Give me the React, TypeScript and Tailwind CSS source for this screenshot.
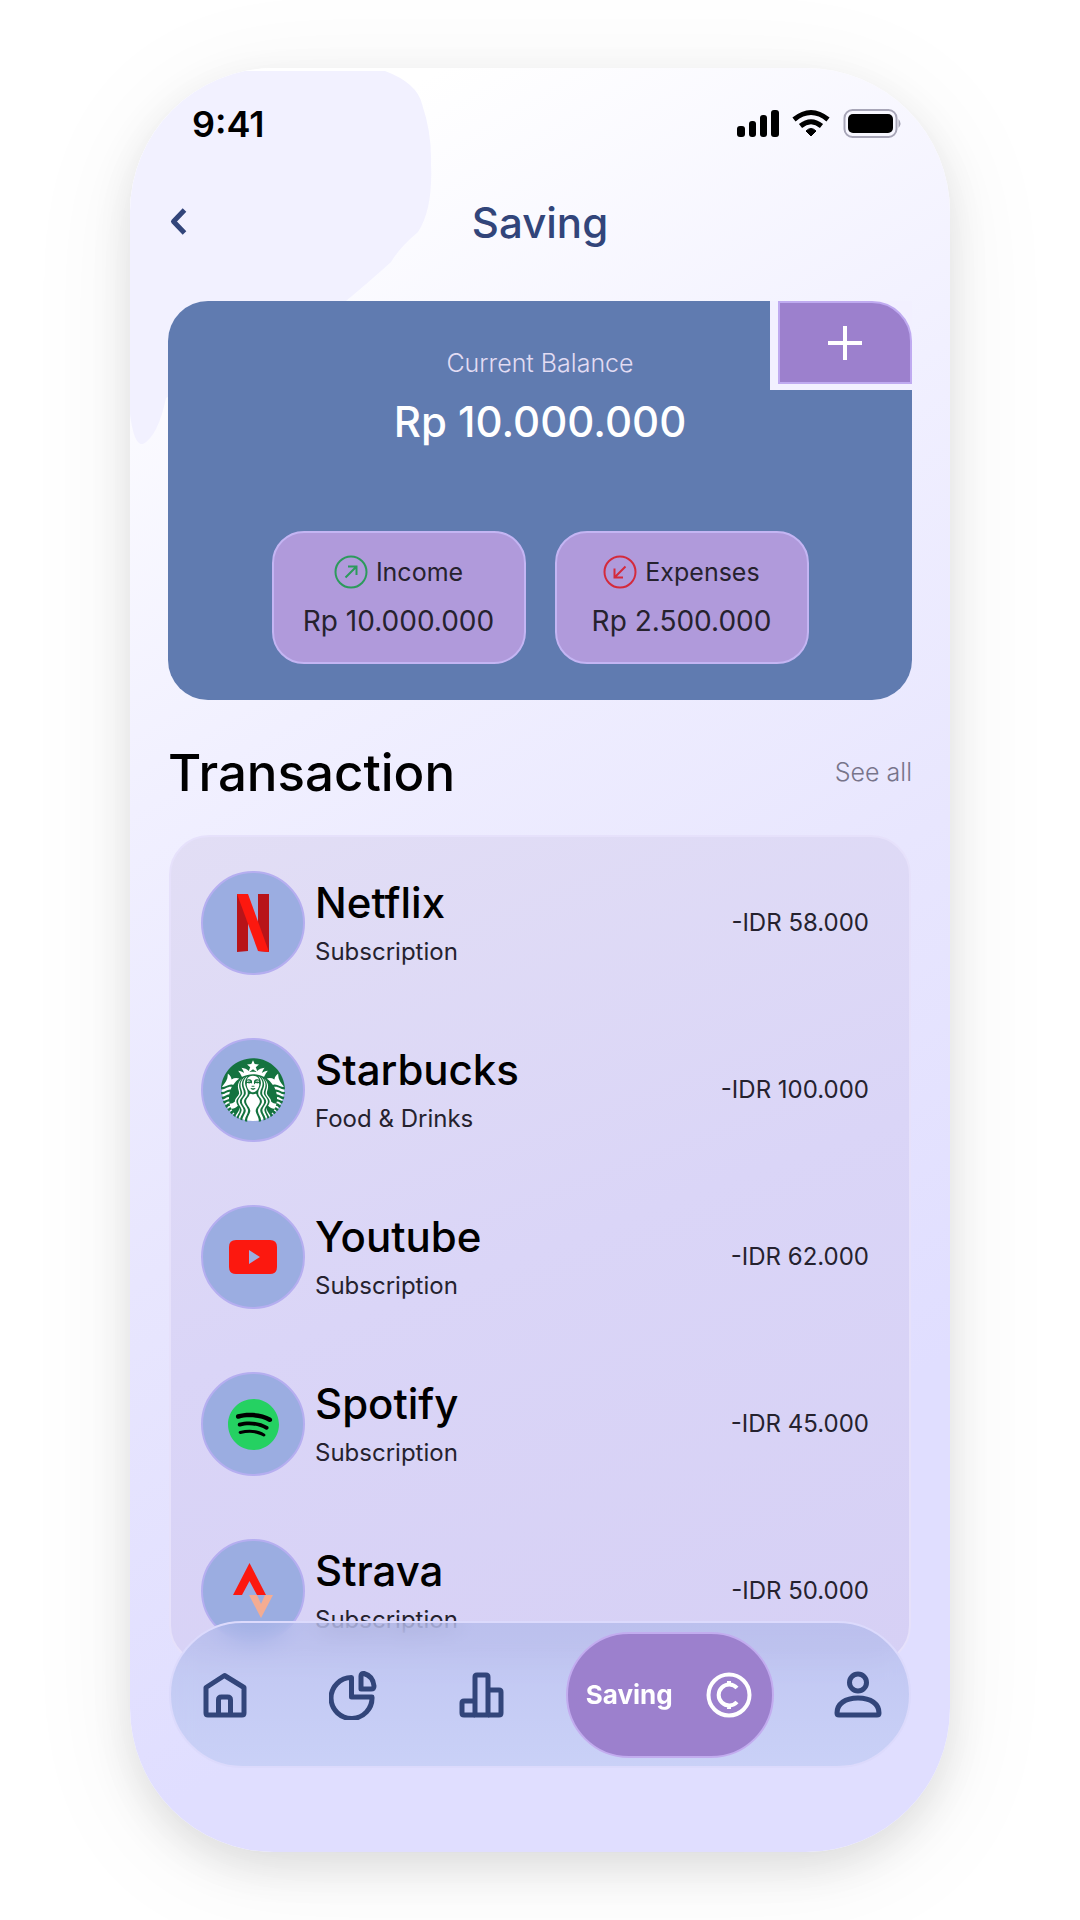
import React from 'react';
import { SiSpotify, SiStarbucks } from 'react-icons/si';

interface Transaction {
  id: string;
  name: string;
  category: string;
  amount: string;
  logo: React.ReactNode;
}

const NetflixLogo = () => (
  <svg width="34" height="60" viewBox="0 0 34 60" aria-hidden="true">
    <path d="M1 1h11v57l-11 1z" fill="#b81419" />
    <path d="M22 1h11v58l-11-1z" fill="#b81419" />
    <path d="M1 1h11l21 58-11-1z" fill="#fc180f" />
  </svg>
);

const StarbucksLogo = () => (
  <span className="flex size-[62px] items-center justify-center rounded-full bg-white">
    <SiStarbucks className="size-16 shrink-0 text-[#14733f]" aria-hidden="true" />
  </span>
);

const YoutubeLogo = () => (
  <svg width="48" height="34" viewBox="0 0 48 34" aria-hidden="true">
    <path
      fillRule="evenodd"
      d="M7 0h34q7 0 7 7v20q0 7-7 7H7q-7 0-7-7V7q0-7 7-7zM20 10v14l11-7z"
      fill="#fc180f"
    />
  </svg>
);

const SpotifyLogo = () => (
  <span className="flex size-12 items-center justify-center rounded-full bg-black">
    <SiSpotify className="size-[51px] shrink-0 text-[#25d162]" aria-hidden="true" />
  </span>
);

const StravaLogo = () => (
  <svg width="40" height="56" viewBox="0 0 40 56" aria-hidden="true">
    <path d="M16.5 0L33 32h-9l-7.5-14L9 32H0z" fill="#fc180f" />
    <path d="M16 32h8l4 9 4-9h8L28 55z" fill="#f4ac92" />
  </svg>
);

const transactions: Transaction[] = [
  { id: 'netflix', name: 'Netflix', category: 'Subscription', amount: '-IDR 58.000', logo: <NetflixLogo /> },
  { id: 'starbucks', name: 'Starbucks', category: 'Food & Drinks', amount: '-IDR 100.000', logo: <StarbucksLogo /> },
  { id: 'youtube', name: 'Youtube', category: 'Subscription', amount: '-IDR 62.000', logo: <YoutubeLogo /> },
  { id: 'spotify', name: 'Spotify', category: 'Subscription', amount: '-IDR 45.000', logo: <SpotifyLogo /> },
  { id: 'strava', name: 'Strava', category: 'Subscription', amount: '-IDR 50.000', logo: <StravaLogo /> },
];

const StatusBar = () => (
  <div className="flex h-11 items-center justify-between pr-2 pl-6">
    <span className="text-4xl font-semibold text-black">9:41</span>
    <svg width="168" height="30" viewBox="0 0 168 30" aria-hidden="true">
      <g fill="#000">
        <rect x="1" y="17" width="8" height="11" rx="3" />
        <rect x="13" y="12" width="7" height="16" rx="3" />
        <rect x="24" y="6" width="7" height="22" rx="3" />
        <rect x="35" y="1" width="8" height="27" rx="3" />
        <path d="M75 27l-5-5q5-5 10 0z" stroke="#000" strokeWidth="1" strokeLinejoin="round" />
        <rect x="112" y="5" width="45" height="19" rx="5" />
      </g>
      <g fill="none" stroke="#000" strokeWidth="5">
        <path d="M58 10.5q17-14 34 0" />
        <path d="M64.5 17q10.5-8.5 21 0" />
      </g>
      <rect x="108.5" y="1" width="52" height="27" rx="8" fill="none" stroke="#a8a6b8" strokeWidth="2" />
      <path d="M162.5 10q4 4.5 0 9z" fill="#a8a6b8" />
    </svg>
  </div>
);

const PageHeader = () => (
  <header className="mt-11 grid h-16 grid-cols-[48px_1fr_48px] items-center">
    <button type="button" aria-label="Back" className="flex h-12 items-center pl-[2px]">
      <svg width="18" height="30" viewBox="0 0 18 30" fill="none" stroke="#32457a" strokeWidth="5" aria-hidden="true">
        <path d="M14.5 3L3.5 14.5L14.5 26" strokeLinejoin="round" />
      </svg>
    </button>
    <h1 className="text-center text-[42px] font-medium text-[#32457a]">Saving</h1>
  </header>
);

interface SummaryTileProps {
  label: string;
  amount: string;
  icon: React.ReactNode;
}

const SummaryTile = ({ label, amount, icon }: SummaryTileProps) => (
  <div className="flex h-[133px] max-w-[254px] flex-1 flex-col items-center justify-center gap-3 rounded-[32px] border-2 border-[#c4b5f3] bg-[#b09adb] text-[#26222e]">
    <div className="flex items-center gap-2 text-[25px] leading-8">
      {icon}
      {label}
    </div>
    <div className="text-[28px] leading-10 whitespace-nowrap">{amount}</div>
  </div>
);

const BalanceCard = () => (
  <section className="relative mt-[47px] flex h-[399px] flex-col items-center rounded-[40px] bg-[#607bb0] px-4 pt-[46px] pb-9">
    <h2 className="text-[25px] leading-8 font-light text-[#e2dcf3]">Current Balance</h2>
    <p className="mt-3 text-[42px] leading-[62px] font-medium text-white">Rp 10.000.000</p>

    <div className="mt-auto flex w-full justify-center gap-[29px]">
      <SummaryTile
        label="Income"
        amount="Rp 10.000.000"
        icon={
          <svg width="34" height="34" viewBox="0 0 34 34" fill="none" stroke="#2c9a5c" strokeWidth="2" aria-hidden="true">
            <circle cx="17" cy="17" r="15.5" />
            <path d="M11.5 22.5L22 12M14 11.5h8.5V20" />
          </svg>
        }
      />
      <SummaryTile
        label="Expenses"
        amount="Rp 2.500.000"
        icon={
          <svg width="34" height="34" viewBox="0 0 34 34" fill="none" stroke="#d42a3c" strokeWidth="2" aria-hidden="true">
            <circle cx="17" cy="17" r="15.5" />
            <path d="M22.5 11.5L12 22M11.5 13.5v9H20" />
          </svg>
        }
      />
    </div>

    {/* Add button sits in the notch of the card */}
    <div className="absolute top-0 right-0 bg-[#f2f0ff] pb-[6px] pl-2">
      <button
        type="button"
        aria-label="Add saving"
        className="flex h-[83px] w-[134px] items-center justify-center rounded-tr-[40px] border-2 border-[#bfaaf0] bg-[#9c80cd]"
      >
        <svg width="34" height="36" viewBox="0 0 34 36" stroke="#fff" strokeWidth="4" aria-hidden="true">
          <path d="M17 1v34M0 18h34" />
        </svg>
      </button>
    </div>
  </section>
);

const TransactionList = () => (
  <section>
    <div className="mt-[41px] flex h-16 items-center justify-between">
      <h2 className="text-[51px] font-medium text-black">Transaction</h2>
      <a href="#transactions" className="text-[25px] font-light text-[#77748a]">
        See all
      </a>
    </div>

    <ul
      id="transactions"
      className="mx-px mt-[30px] flex flex-col gap-[63px] rounded-[40px] border-2 border-[#e6e1fb] bg-linear-160 from-[#e2def5] via-[#dad5f7] to-[#d6d0f5] px-[30px] pt-[34px] pb-5"
    >
      {transactions.map((item) => (
        <li key={item.id} className="flex h-[104px] items-center">
          <div className="flex size-[104px] shrink-0 items-center justify-center rounded-full border-2 border-[#b5aef0] bg-[#9bade1]">
            {item.logo}
          </div>
          <div className="ml-[10px] flex-1">
            <h3 className="text-[42px] leading-[58px] font-medium text-black">{item.name}</h3>
            <p className="text-2xl leading-10 text-[#25222f]">{item.category}</p>
          </div>
          <span className="pr-[10px] text-2xl text-[#25222f]">{item.amount}</span>
        </li>
      ))}
    </ul>
  </section>
);

const navLink = 'flex w-12 items-center justify-center';

const BottomNav = () => (
  <nav className="absolute inset-x-[39px] bottom-[84px] flex h-[147px] items-center justify-between rounded-full border-2 border-[#dcdafc] bg-linear-to-b from-[#a9b4e8]/60 to-[#bac8f2]/60 pr-[27px] pl-[30px] text-[#32457a] backdrop-blur-md">
    <a href="#home" aria-label="Home" className={navLink}>
      <svg width="44" height="46" viewBox="0 0 44 46" fill="none" stroke="currentColor" strokeWidth="5" strokeLinejoin="round" aria-hidden="true">
        <path d="M3 15.5L21.5 3.5L41 15.5V41q0 2-2 2H5q-2 0-2-2z" />
        <path d="M15.5 43V28q0-3 3-3h6q3 0 3 3v15" />
      </svg>
    </a>
    <a href="#budget" aria-label="Budget" className={navLink}>
      <svg width="48" height="50" viewBox="0 0 48 50" fill="none" stroke="currentColor" strokeWidth="5" strokeLinejoin="round" aria-hidden="true">
        <path d="M22.5 7.5V27H43A20.5 20.5 0 1 1 22.5 7.500z" />
        <path d="M32 6q0-3 3-2.500Q44 6 45 16q0 3-3 3H32z" />
      </svg>
    </a>
    <a href="#stats" aria-label="Statistics" className={navLink}>
      <svg width="46" height="48" viewBox="0 0 46 48" fill="none" stroke="currentColor" strokeWidth="5" strokeLinejoin="round" aria-hidden="true">
        <path d="M16 44H5q-2 0-2-2V32q0-2 2-2h11" />
        <path d="M16 44V6q0-2 2-2h9q2 0 2 2v38z" />
        <path d="M29 19h11q2 0 2 2v21q0 2-2 2H29" />
      </svg>
    </a>
    <a
      href="#saving"
      aria-current="page"
      className="-mx-5 flex h-[126px] w-[208px] items-center justify-between rounded-full border-2 border-[#c2acef] bg-[#9c80cd] pr-5 pl-[18px] text-white"
    >
      <span className="text-[26px] font-bold">Saving</span>
      <svg width="46" height="46" viewBox="0 0 46 46" fill="none" stroke="currentColor" strokeWidth="4" aria-hidden="true">
        <circle cx="23" cy="23" r="20.5" />
        <path d="M31 16A10.5 10.5 0 1 0 31 30M23 9v5M23 32v5" />
      </svg>
    </a>
    <a href="#profile" aria-label="Profile" className={navLink}>
      <svg width="48" height="48" viewBox="0 0 48 48" fill="none" stroke="currentColor" strokeWidth="5" strokeLinejoin="round" aria-hidden="true">
        <circle cx="24" cy="11.5" r="8.5" />
        <path d="M5 44q-2 0-2-2C3 33 11 27 24 27s21 6 21 15q0 2-2 2z" />
      </svg>
    </a>
  </nav>
);

const App: React.FC = () => {
  return (
    <div className="overflow-hidden bg-white pt-[68px] pb-[68px] font-['Inter',sans-serif]">
      <main className="relative isolate mx-auto w-full max-w-[820px] overflow-hidden rounded-[144px] bg-[linear-gradient(150deg,#ffffff_8%,#f1f0ff_33%,#e8e6fe_54%,#e0deff_78%)] px-[38px] pt-[34px] pb-[187px] shadow-[0_16px_40px_rgba(0,0,0,0.10),0_16px_120px_rgba(0,0,0,0.06)]">
        {/* Soft tint behind the status bar */}
        <svg className="absolute top-0 left-0 -z-10" width="302" height="380" viewBox="0 0 302 380" aria-hidden="true">
          <path
            d="M0 3h255q32 12 37 33 10 30 9 60 2 45-13 68-18 15-27 30-22 20-51 44L36 330q-8 38-23 46-9 2-13-30z"
            fill="#f2f1ff"
          />
        </svg>
        <StatusBar />
        <PageHeader />
        <BalanceCard />
        <TransactionList />
        <BottomNav />
      </main>
    </div>
  );
};

export default App;
